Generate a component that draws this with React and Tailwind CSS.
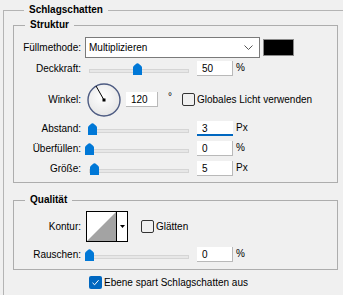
import React from 'react'

// slider thumb (Windows 10 style)
function Thumb({ className }) {
  return (
    <svg className={`absolute top-[2px] ${className}`} width="9" height="12" viewBox="0 0 9 12">
      <path d="M0 4.5 Q0 3.3 1.2 2.4 L3.6 0.5 Q4.5 0 5.4 0.5 L7.8 2.4 Q9 3.3 9 4.5 V12 H0 Z" fill="#0078d7" />
    </svg>
  )
}

function Slider({ thumb }) {
  return (
    <div className="relative w-[104px] h-[15px] shrink-0">
      <div className="absolute left-[4px] right-0 top-[8px] h-[4px] bg-[#e7e7e7] border border-[#d5d5d5]" />
      <Thumb className={thumb} />
    </div>
  )
}

function NumInput({ value, focused }) {
  return (
    <div
      className={`w-[36px] h-[15px] bg-white pl-[5px] leading-[15px] ${
        focused ? 'border-b-2 border-[#0067c0]' : 'border-b border-r border-[#b9b9b9]'
      }`}
    >
      {value}
    </div>
  )
}

function Row({ label, className = '', children }) {
  return (
    <div className={`flex items-center ${className}`}>
      <span className="w-[67px] shrink-0 text-right">{label}</span>
      <div className="ml-[4px] flex items-center">{children}</div>
    </div>
  )
}

function SliderRow({ label, thumb, value, unit, focused, className }) {
  return (
    <Row label={label} className={`h-[15px] ${className}`}>
      <Slider thumb={thumb} />
      <div className="ml-[8px]">
        <NumInput value={value} focused={focused} />
      </div>
      <span className="ml-[3px] -mt-[3px]">{unit}</span>
    </Row>
  )
}

function CheckBox({ checked }) {
  if (checked) {
    return (
      <span className="w-[13px] h-[13px] rounded-[2px] bg-[#0067c0] flex items-center justify-center shrink-0">
        <svg width="9" height="9" viewBox="0 0 9 9">
          <path d="M1.5 4.8 L3.6 6.8 L7.6 2.2" fill="none" stroke="white" strokeWidth="1" />
        </svg>
      </span>
    )
  }
  return <span className="w-[13px] h-[13px] rounded-[2px] border border-[#333] bg-[#f0f0f0] shrink-0" />
}

export default function App() {
  return (
    <div className="w-[343px] h-[295px] overflow-hidden bg-[#f0f0f0] pt-[3px] text-[10px] text-black font-['Liberation_Sans',Arial,sans-serif]">
      <fieldset className="ml-[3px] w-[345px] border-l border-t border-[#b4b4b4] pl-[9px] pb-[30px]">
        <legend className="ml-[11px] px-[5px] font-bold leading-[14px]">Schlagschatten</legend>

        {/* Struktur */}
        <fieldset className="w-[325px] border border-[#adadad] pb-[6px]">
          <legend className="ml-[11px] px-[5px] font-bold leading-[16px]">Struktur</legend>

          <Row label="Füllmethode:" className="mt-[4px] h-[21px]">
            <div className="w-[175px] h-[21px] bg-white border border-[#7a7a7a] flex items-center pl-[3px] pr-[6px]">
              <span className="flex-1">Multiplizieren</span>
              <svg width="9" height="5" viewBox="0 0 9 5">
                <path d="M0.5 0.5 L4.5 4.5 L8.5 0.5" fill="none" stroke="#555" strokeWidth="1" />
              </svg>
            </div>
            <div className="ml-[3px] w-[31px] h-[17px] border border-[#8a8a8a] bg-black" />
          </Row>

          <SliderRow label="Deckkraft:" thumb="left-[48px]" value="50" unit="%" className="mt-[3px]" />

          <Row label="Winkel:" className="mt-[7px] h-[33px]">
            <svg className="ml-[2px]" width="34" height="34" viewBox="0 0 34 34">
              <defs>
                <radialGradient id="dialFill" cx="0.45" cy="0.4" r="0.6">
                  <stop offset="0" stopColor="#ffffff" />
                  <stop offset="1" stopColor="#e6e6e6" />
                </radialGradient>
              </defs>
              <circle cx="17" cy="17" r="16" fill="url(#dialFill)" stroke="#4d5b82" strokeWidth="1.4" />
              <line x1="17" y1="17" x2="9" y2="3" stroke="#000" strokeWidth="1" />
              <rect x="15.5" y="15.5" width="3" height="3" fill="#000" />
            </svg>
            <div className="ml-[5px] w-[32px] h-[15px] bg-white pl-[5px] leading-[15px] border-b border-r border-[#b9b9b9]">120</div>
            <span className="ml-[10px] -mt-[6px]">°</span>
            <span className="ml-[10px] flex items-center">
              <CheckBox />
              <span className="ml-[2px]">Globales Licht verwenden</span>
            </span>
          </Row>

          <SliderRow label="Abstand:" thumb="left-[3px]" value="3" unit="Px" focused className="mt-[5px]" />
          <SliderRow label="Überfüllen:" thumb="left-[0px]" value="0" unit="%" className="mt-[5px]" />
          <SliderRow label="Größe:" thumb="left-[5px]" value="5" unit="Px" className="mt-[5px]" />
        </fieldset>

        {/* Qualität */}
        <fieldset className="mt-[9px] w-[325px] border border-[#adadad] pb-[7px]">
          <legend className="ml-[11px] px-[5px] font-bold leading-[16px]">Qualität</legend>

          <Row label="Kontur:" className="mt-[3px] h-[31px]">
            <div className="ml-[1px] w-[42px] h-[31px] border border-black bg-white flex">
              <svg width="29" height="29" viewBox="0 0 29 29">
                <polygon points="0,29 29,0 29,29" fill="#a3a3a3" />
              </svg>
              <div className="flex-1 flex items-center justify-center border-l border-black">
                <svg width="5" height="3" viewBox="0 0 5 3">
                  <polygon points="0,0 5,0 2.5,3" fill="#000" />
                </svg>
              </div>
            </div>
            <span className="ml-[13px] flex items-center">
              <CheckBox />
              <span className="ml-[2px]">Glätten</span>
            </span>
          </Row>

          <SliderRow label="Rauschen:" thumb="left-[0px]" value="0" unit="%" className="mt-[5px]" />
        </fieldset>

        <div className="mt-[6px] ml-[76px] flex items-center h-[13px]">
          <CheckBox checked />
          <span className="ml-[2px]">Ebene spart Schlagschatten aus</span>
        </div>
      </fieldset>
    </div>
  )
}
